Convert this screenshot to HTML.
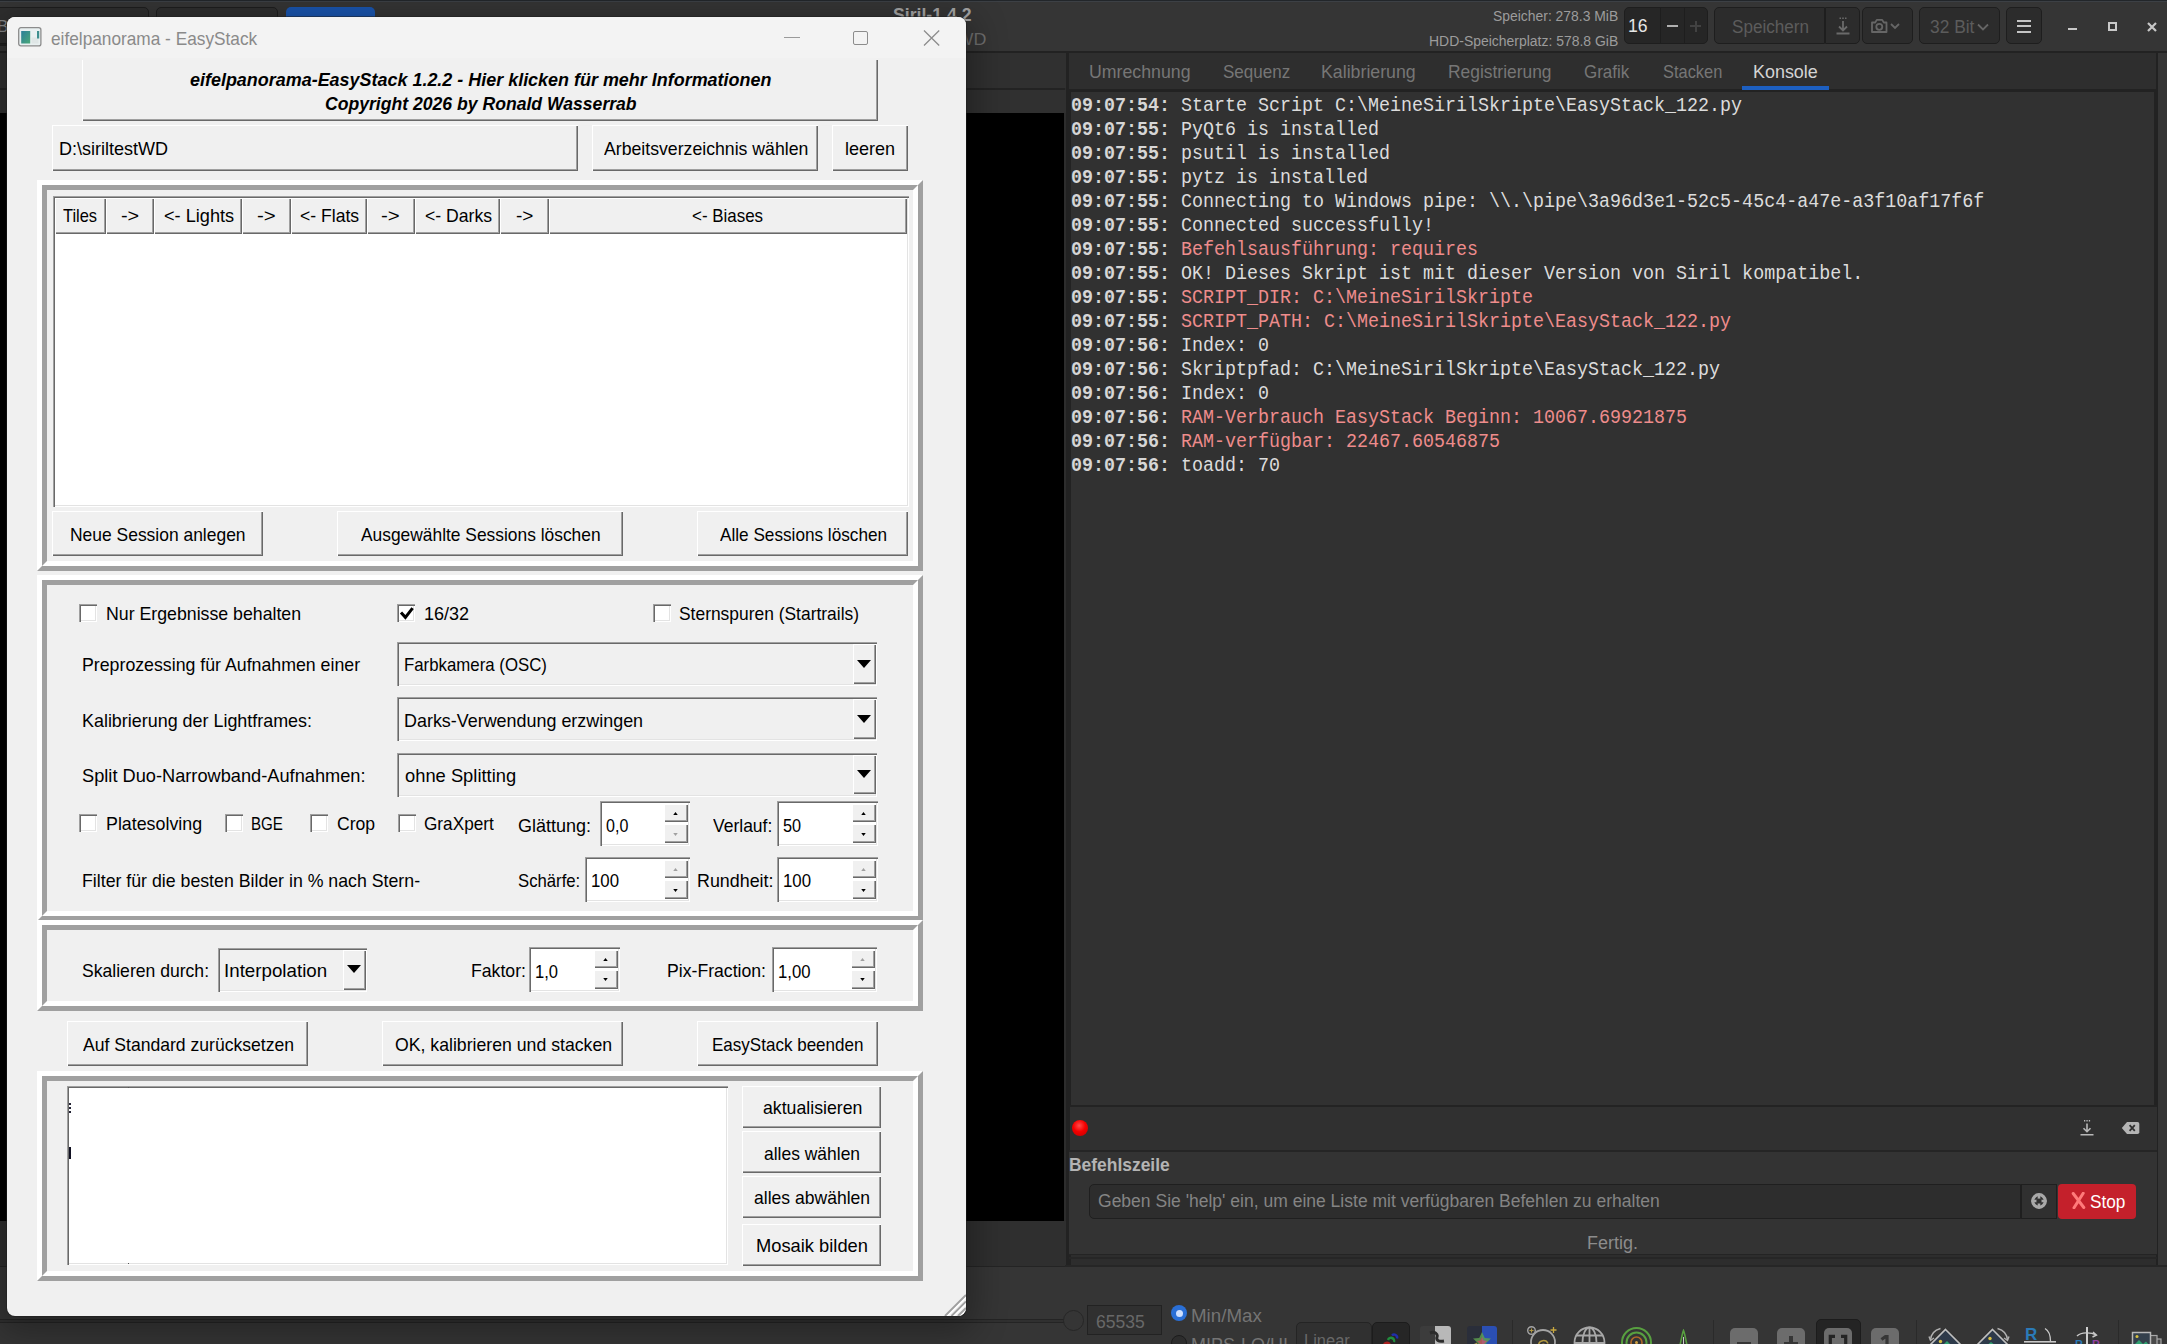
<!DOCTYPE html>
<html><head><meta charset="utf-8"><title>eifelpanorama - EasyStack</title>
<style>
html,body{margin:0;padding:0;width:2167px;height:1344px;overflow:hidden;}
body{width:2167px;height:1344px;overflow:hidden;position:relative;background:#2d2d2d;font-family:'Liberation Sans',sans-serif;}
.t{position:absolute;white-space:pre;transform-origin:0 0;}
div{box-sizing:border-box;}
#root{position:absolute;left:0;top:0;width:2167px;height:1344px;overflow:hidden;background:#2d2d2d;}

.btn{position:absolute;background:#f0f0f0;box-shadow:inset 1px 1px 0 #fff,inset -1px -1px 0 #696969,inset -2px -2px 0 #a0a0a0;}
.sunk{position:absolute;box-shadow:inset 1px 1px 0 #a0a0a0,inset 2px 2px 0 #696969,inset -1px -1px 0 #fff,inset -2px -2px 0 #e3e3e3;}
.fo{position:absolute;border-style:solid;border-width:5px;border-color:#fff #a0a0a0 #a0a0a0 #fff;}
.fi{position:absolute;left:0;top:0;right:0;bottom:0;border-style:solid;border-width:5px;border-color:#a0a0a0 #fff #fff #a0a0a0;}
.cb{position:absolute;width:18px;height:18px;background:#fff;box-shadow:inset 1px 1px 0 #a0a0a0,inset 2px 2px 0 #696969,inset -1px -1px 0 #fff,inset -2px -2px 0 #e3e3e3;}
.gb{position:absolute;background:#2c2c2c;border:1px solid #1e1e1e;border-radius:5px;}

</style></head><body><div id="root">
<div style="position:absolute;left:0px;top:0px;width:2167px;height:52px;background:#353535;"></div><div style="position:absolute;left:0px;top:0px;width:2167px;height:1px;background:#22262a;"></div><div style="position:absolute;left:0px;top:1px;width:2167px;height:1px;background:#3c4045;"></div><div style="position:absolute;left:0px;top:51px;width:2167px;height:2px;background:#222;"></div><div style="position:absolute;left:0px;top:53px;width:1066px;height:35px;background:#303030;"></div><div style="position:absolute;left:0px;top:90px;width:1066px;height:23px;background:#303030;"></div><div class="gb" style="left:-6px;top:7px;width:155px;height:37px;background:#2f2f2f;"></div><div class="gb" style="left:156px;top:7px;width:122px;height:37px;background:#2f2f2f;"></div><div style="position:absolute;left:286px;top:7px;width:89px;height:37px;background:#1a56b0;border-radius:5px;"></div><span class="t" style="left:-3.00px;top:17.55px;font-size:17px;line-height:17px;color:#8a8a8a;">B</span><span class="t" style="left:893.00px;top:5.70px;font-size:18px;line-height:18px;color:#a6a6a6;font-weight:bold;transform:scaleX(0.9809);">Siril-1.4.2</span><span class="t" style="left:877.95px;top:30.95px;font-size:17px;line-height:17px;color:#6e6e6e;transform:scaleX(1.0525);">D:\siriltestWD</span><span class="t" style="left:1493.00px;top:9.97px;font-size:13.8px;line-height:13.8px;color:#9c9c9c;transform:scaleX(1.0078);">Speicher: 278.3 MiB</span><span class="t" style="left:1428.99px;top:34.77px;font-size:13.8px;line-height:13.8px;color:#9c9c9c;transform:scaleX(1.0113);">HDD-Speicherplatz: 578.8 GiB</span><div class="gb" style="left:1624px;top:7px;width:84px;height:37px;background:#262626;"></div><div style="position:absolute;left:1660px;top:8px;width:1px;height:35px;background:#1e1e1e;"></div><div style="position:absolute;left:1684px;top:8px;width:1px;height:35px;background:#1e1e1e;"></div><span class="t" style="left:1628.02px;top:16.70px;font-size:18px;line-height:18px;color:#e6e6e6;transform:scaleX(0.9784);">16</span><div style="position:absolute;left:1667px;top:25px;width:11px;height:2px;background:#b0b0b0;"></div><div style="position:absolute;left:1690px;top:25px;width:11px;height:2px;background:#424242;"></div><div style="position:absolute;left:1694.5px;top:20.5px;width:2px;height:11px;background:#424242;"></div><div class="gb" style="left:1714px;top:7px;width:111px;height:37px;border-radius:5px 0 0 5px;"></div><span class="t" style="left:1731.50px;top:17.70px;font-size:18px;line-height:18px;color:#5c5c5c;transform:scaleX(0.9495);">Speichern</span><div class="gb" style="left:1825px;top:7px;width:35px;height:37px;border-radius:0 5px 5px 0;"></div><svg style="position:absolute;left:1834px;top:16px" width="18" height="20" viewBox="0 0 18 20"><g stroke="#6a6a6a" stroke-width="1.8" fill="none"><path d="M9 5v9M5 10.5l4 4 4-4M2.5 17.5h13"/><path d="M5.5 2.2h1.5M8.2 2.2h1.6M11 2.2h1.5" stroke-width="1.6"/></g></svg><div class="gb" style="left:1862px;top:7px;width:51px;height:37px;"></div><svg style="position:absolute;left:1870px;top:16px" width="36" height="20" viewBox="0 0 36 20"><g stroke="#666" stroke-width="1.8" fill="none"><path d="M2 6.5h3.2l1.6-2.6h5.4l1.6 2.6H16.5v9.5H2z" stroke-linejoin="round"/><circle cx="9.3" cy="10.8" r="3"/><path d="M21 8l4 4 4-4"/></g></svg><div class="gb" style="left:1919px;top:7px;width:81px;height:37px;"></div><span class="t" style="left:1929.60px;top:17.70px;font-size:18px;line-height:18px;color:#5c5c5c;transform:scaleX(0.9646);">32 Bit</span><svg style="position:absolute;left:1976px;top:22px" width="14" height="10" viewBox="0 0 14 10"><path d="M2 2.5l5 5 5-5" stroke="#666" stroke-width="1.8" fill="none"/></svg><div class="gb" style="left:2006px;top:7px;width:36px;height:37px;"></div><div style="position:absolute;left:2017px;top:19.5px;width:14px;height:2px;background:#c4c4c4;"></div><div style="position:absolute;left:2017px;top:25px;width:14px;height:2px;background:#c4c4c4;"></div><div style="position:absolute;left:2017px;top:30.5px;width:14px;height:2px;background:#c4c4c4;"></div><div style="position:absolute;left:2068px;top:28px;width:9px;height:2px;background:#c8c8c8;"></div><div style="position:absolute;left:2108px;top:22px;width:9px;height:9px;border:2px solid #c8c8c8;"></div><svg style="position:absolute;left:2146px;top:21px" width="12" height="12" viewBox="0 0 12 12"><path d="M2 2l8 8M10 2l-8 8" stroke="#c8c8c8" stroke-width="2.2"/></svg><div style="position:absolute;left:0px;top:44px;width:8px;height:2px;background:#222;"></div><div style="position:absolute;left:0px;top:88px;width:1065px;height:2px;background:#232323;"></div><div style="position:absolute;left:0px;top:113px;width:1064px;height:1108px;background:#000;"></div><div style="position:absolute;left:0px;top:1221px;width:1066px;height:45px;background:#2f2f2f;"></div><div style="position:absolute;left:0px;top:1266px;width:1066px;height:78px;background:#353535;"></div><div style="position:absolute;left:0px;top:1266px;width:1066px;height:1.3px;background:#242424;"></div><div style="position:absolute;left:0px;top:1319px;width:1064px;height:1px;background:#242424;"></div><div style="position:absolute;left:0px;top:1320px;width:1064px;height:2px;background:#303030;"></div><div style="position:absolute;left:0px;top:1322px;width:1064px;height:1px;background:#242424;"></div><div style="position:absolute;left:1066px;top:53px;width:3px;height:1213px;background:#222;"></div><div style="position:absolute;left:1069px;top:53px;width:1089px;height:36px;background:#2e2e2e;"></div><div style="position:absolute;left:1069px;top:89px;width:1089px;height:2.6px;background:#222;"></div><div style="position:absolute;left:2156px;top:53px;width:11px;height:1213px;background:#353535;"></div><div style="position:absolute;left:2156px;top:53px;width:2px;height:1213px;background:#222;"></div><div style="position:absolute;left:1066px;top:91.5px;width:5px;height:1175px;background:#222;"></div><div style="position:absolute;left:1070.5px;top:91.5px;width:1083.5px;height:1014px;background:#313131;"></div><div style="position:absolute;left:2154px;top:91.5px;width:4px;height:1014px;background:#222;"></div><span class="t" style="left:1088.74px;top:63.27px;font-size:18.5px;line-height:18.5px;color:#767676;transform:scaleX(0.9587);">Umrechnung</span><span class="t" style="left:1223.00px;top:63.27px;font-size:18.5px;line-height:18.5px;color:#767676;transform:scaleX(0.9205);">Sequenz</span><span class="t" style="left:1321.04px;top:63.27px;font-size:18.5px;line-height:18.5px;color:#767676;transform:scaleX(0.9596);">Kalibrierung</span><span class="t" style="left:1447.76px;top:63.27px;font-size:18.5px;line-height:18.5px;color:#767676;transform:scaleX(0.9408);">Registrierung</span><span class="t" style="left:1584.00px;top:63.27px;font-size:18.5px;line-height:18.5px;color:#767676;transform:scaleX(0.9184);">Grafik</span><span class="t" style="left:1662.50px;top:63.27px;font-size:18.5px;line-height:18.5px;color:#767676;transform:scaleX(0.8880);">Stacken</span><span class="t" style="left:1753.03px;top:63.27px;font-size:18.5px;line-height:18.5px;color:#d4d4d4;transform:scaleX(0.9685);">Konsole</span><div style="position:absolute;left:1742px;top:86.3px;width:87px;height:3.6px;background:#1d5fc0;"></div><div style="position:absolute;left:1071.2px;top:91.8px;width:1200px;height:600px;font-family:'Liberation Mono', monospace;font-size:20px;transform:scaleX(0.91667);transform-origin:0 0;"><div style="position:absolute;left:0;top:4.67px;height:20px;line-height:20px;white-space:pre;color:#dcdcdc"><b style="color:#d6d6d6">09:07:54:</b> Starte Script C:\MeineSirilSkripte\EasyStack_122.py</div><div style="position:absolute;left:0;top:28.67px;height:20px;line-height:20px;white-space:pre;color:#dcdcdc"><b style="color:#d6d6d6">09:07:55:</b> PyQt6 is installed</div><div style="position:absolute;left:0;top:52.67px;height:20px;line-height:20px;white-space:pre;color:#dcdcdc"><b style="color:#d6d6d6">09:07:55:</b> psutil is installed</div><div style="position:absolute;left:0;top:76.67px;height:20px;line-height:20px;white-space:pre;color:#dcdcdc"><b style="color:#d6d6d6">09:07:55:</b> pytz is installed</div><div style="position:absolute;left:0;top:100.67px;height:20px;line-height:20px;white-space:pre;color:#dcdcdc"><b style="color:#d6d6d6">09:07:55:</b> Connecting to Windows pipe: \\.\pipe\3a96d3e1-52c5-45c4-a47e-a3f10af17f6f</div><div style="position:absolute;left:0;top:124.67px;height:20px;line-height:20px;white-space:pre;color:#dcdcdc"><b style="color:#d6d6d6">09:07:55:</b> Connected successfully!</div><div style="position:absolute;left:0;top:148.67px;height:20px;line-height:20px;white-space:pre;color:#ee8c8c"><b style="color:#d6d6d6">09:07:55:</b> Befehlsausführung: requires</div><div style="position:absolute;left:0;top:172.67px;height:20px;line-height:20px;white-space:pre;color:#dcdcdc"><b style="color:#d6d6d6">09:07:55:</b> OK! Dieses Skript ist mit dieser Version von Siril kompatibel.</div><div style="position:absolute;left:0;top:196.67px;height:20px;line-height:20px;white-space:pre;color:#ee8c8c"><b style="color:#d6d6d6">09:07:55:</b> SCRIPT_DIR: C:\MeineSirilSkripte</div><div style="position:absolute;left:0;top:220.67px;height:20px;line-height:20px;white-space:pre;color:#ee8c8c"><b style="color:#d6d6d6">09:07:55:</b> SCRIPT_PATH: C:\MeineSirilSkripte\EasyStack_122.py</div><div style="position:absolute;left:0;top:244.67px;height:20px;line-height:20px;white-space:pre;color:#dcdcdc"><b style="color:#d6d6d6">09:07:56:</b> Index: 0</div><div style="position:absolute;left:0;top:268.67px;height:20px;line-height:20px;white-space:pre;color:#dcdcdc"><b style="color:#d6d6d6">09:07:56:</b> Skriptpfad: C:\MeineSirilSkripte\EasyStack_122.py</div><div style="position:absolute;left:0;top:292.67px;height:20px;line-height:20px;white-space:pre;color:#dcdcdc"><b style="color:#d6d6d6">09:07:56:</b> Index: 0</div><div style="position:absolute;left:0;top:316.67px;height:20px;line-height:20px;white-space:pre;color:#ee8c8c"><b style="color:#d6d6d6">09:07:56:</b> RAM-Verbrauch EasyStack Beginn: 10067.69921875</div><div style="position:absolute;left:0;top:340.67px;height:20px;line-height:20px;white-space:pre;color:#ee8c8c"><b style="color:#d6d6d6">09:07:56:</b> RAM-verfügbar: 22467.60546875</div><div style="position:absolute;left:0;top:364.67px;height:20px;line-height:20px;white-space:pre;color:#dcdcdc"><b style="color:#d6d6d6">09:07:56:</b> toadd: 70</div></div><div style="position:absolute;left:1069px;top:1105px;width:1088px;height:1.5px;background:#232323;"></div><div style="position:absolute;left:1070px;top:1106.5px;width:1087px;height:43.5px;background:#303030;"></div><div style="position:absolute;left:1069px;top:1150px;width:1088px;height:1.5px;background:#252525;"></div><div style="position:absolute;left:1069px;top:1151.5px;width:1088px;height:103px;background:#333333;"></div><div style="position:absolute;left:1069px;top:1254px;width:1088px;height:1.3px;background:#242424;"></div><div style="position:absolute;left:1069px;top:1257.3px;width:1088px;height:1.3px;background:#262626;"></div><div style="position:absolute;left:1065px;top:1265px;width:1102px;height:1.5px;background:#262626;"></div><div style="position:absolute;left:1066px;top:1266.5px;width:1101px;height:78px;background:#353535;"></div><div style="position:absolute;left:1072px;top:1120px;width:16px;height:16px;border-radius:50%;background:radial-gradient(circle at 45% 35%,#ff4a4a 0,#f40000 45%,#c00000 100%);"></div><svg style="position:absolute;left:2078px;top:1119px" width="18" height="18" viewBox="0 0 18 18"><g stroke="#b8b8b8" stroke-width="1.6" fill="none"><path d="M9 4.5v8M5.5 9.2l3.5 3.5 3.5-3.5M2.5 15.7h13"/><path d="M6 1.8h1.3M8.4 1.8h1.3M10.8 1.8h1.3" stroke-width="1.4"/></g></svg><svg style="position:absolute;left:2121px;top:1121px" width="19" height="14" viewBox="0 0 19 14"><path d="M6 1h10.5a1.8 1.8 0 0 1 1.8 1.8v8.4a1.8 1.8 0 0 1-1.8 1.8H6L.8 7z" fill="#b4b4b4"/><path d="M8.6 4.2l5.2 5.6M13.8 4.2l-5.2 5.6" stroke="#303030" stroke-width="1.8"/></svg><span class="t" style="left:1069.00px;top:1156.72px;font-size:17.5px;line-height:17.5px;color:#b4b4b4;font-weight:bold;transform:scaleX(0.9958);">Befehlszeile</span><div class="gb" style="left:1089px;top:1183.5px;width:932px;height:35px;background:#2d2d2d;border-color:#1f1f1f;border-radius:5px 0 0 5px;"></div><span class="t" style="left:1098.00px;top:1192.92px;font-size:17.5px;line-height:17.5px;color:#848484;transform:scaleX(1.0010);">Geben Sie &#x27;help&#x27; ein, um eine Liste mit verfügbaren Befehlen zu erhalten</span><div class="gb" style="left:2021px;top:1183.5px;width:36px;height:35px;background:#303030;border-color:#1f1f1f;border-radius:0;"></div><svg style="position:absolute;left:2030px;top:1192px" width="18" height="18" viewBox="0 0 18 18"><circle cx="9" cy="9" r="6.3" stroke="#a8a8a8" stroke-width="3.2" fill="none"/><path d="M9 1.500v15M1.500 9h15" stroke="#a8a8a8" stroke-width="2.6"/><circle cx="9" cy="9" r="2.600" fill="#303030"/></svg><div style="position:absolute;left:2057.5px;top:1183.5px;width:78.5px;height:35px;background:#c4202b;border-radius:4px;"></div><svg style="position:absolute;left:2071px;top:1192px" width="15" height="17" viewBox="0 0 15 17"><path d="M2.2 1.5l10.6 14M12.2 1.2L3 15.8" stroke="#ff7a7a" stroke-width="3" stroke-linecap="round"/></svg><span class="t" style="left:2089.60px;top:1193.20px;font-size:18px;line-height:18px;color:#fff;transform:scaleX(0.9563);">Stop</span><span class="t" style="left:1586.97px;top:1235.12px;font-size:17.5px;line-height:17.5px;color:#8c8c8c;transform:scaleX(1.0266);">Fertig.</span><div style="position:absolute;left:1063px;top:1310px;width:21px;height:21px;border-radius:50%;border:1.5px solid #262626;background:#353535;"></div><div style="position:absolute;left:1087px;top:1305px;width:75px;height:30px;border:1px solid #222;background:#303030;"></div><span class="t" style="left:1096.00px;top:1313.92px;font-size:17.5px;line-height:17.5px;color:#686868;transform:scaleX(1.0014);">65535</span><div style="position:absolute;left:1171px;top:1305px;width:16px;height:16px;border-radius:50%;background:#2a6fd6;"></div><div style="position:absolute;left:1175.5px;top:1309.5px;width:7px;height:7px;border-radius:50%;background:#cfe0ff;"></div><span class="t" style="left:1190.93px;top:1307.62px;font-size:17.5px;line-height:17.5px;color:#747474;transform:scaleX(1.0708);">Min/Max</span><div style="position:absolute;left:1171px;top:1335px;width:16px;height:16px;border-radius:50%;border:1.5px solid #1c1c1c;background:#2d2d2d;"></div><span class="t" style="left:1190.97px;top:1337.12px;font-size:17.5px;line-height:17.5px;color:#747474;transform:scaleX(1.0275);">MIPS-LO/HI</span><div class="gb" style="left:1296px;top:1322px;width:76px;height:30px;background:#303030;border-color:#242424;"></div><span class="t" style="left:1304.06px;top:1333.12px;font-size:17.5px;line-height:17.5px;color:#686868;transform:scaleX(0.9411);">Linear</span><div class="gb" style="left:1372px;top:1322px;width:38px;height:30px;background:#262626;border-color:#1c1c1c;"></div><div style="position:absolute;left:7px;top:17px;width:959px;height:1299px;background:#f0f0f0;border-radius:8px;box-shadow:0 0 0 1px rgba(30,30,30,.5),0 8px 34px 8px rgba(0,0,0,.30);"></div><div style="position:absolute;left:7px;top:17px;width:959px;height:41px;background:#f3f3f3;border-radius:8px 8px 0 0;"></div><svg style="position:absolute;left:18px;top:27px" width="24" height="20" viewBox="0 0 24 20"><defs><linearGradient id="ig" x1="0" y1="0" x2="1" y2="1"><stop offset="0" stop-color="#2a7f9a"/><stop offset="1" stop-color="#4aa878"/></linearGradient></defs><rect x=".7" y=".7" width="22.2" height="18.2" rx="2.2" fill="#e9f0f1" stroke="#8c8c8c" stroke-width="1.3"/><rect x="3.2" y="4" width="9" height="12.5" fill="url(#ig)"/><rect x="13.5" y="10.5" width="7" height="6" fill="#dfe6e6"/><rect x="19" y="4" width="2.2" height="7.5" fill="#3f8f8f"/></svg><span class="t" style="left:51.00px;top:29.53px;font-size:18.2px;line-height:18.2px;color:#8a8a8a;transform:scaleX(0.9485);">eifelpanorama - EasyStack</span><div style="position:absolute;left:783.5px;top:36.5px;width:16px;height:1.3px;background:#9a9a9a;"></div><div style="position:absolute;left:853px;top:30.5px;width:15px;height:14.5px;border:1.4px solid #8c8c8c;border-radius:2px;"></div><svg style="position:absolute;left:922px;top:29px" width="19" height="18" viewBox="0 0 19 18"><path d="M2 1.5l15.2 15M17.2 1.5L2 16.5" stroke="#8c8c8c" stroke-width="1.3"/></svg><div class="btn" style="left:82px;top:59px;width:796px;height:61.5px;"></div><div style="position:absolute;left:82px;top:58px;width:796px;height:2px;background:#f1f1f1;"></div><span class="t" style="left:189.50px;top:70.83px;font-size:18.2px;line-height:18.2px;color:#000;font-weight:bold;font-style:italic;transform:scaleX(0.9866);">eifelpanorama-EasyStack 1.2.2 - Hier klicken für mehr Informationen</span><span class="t" style="left:324.50px;top:94.83px;font-size:18.2px;line-height:18.2px;color:#000;font-weight:bold;font-style:italic;transform:scaleX(0.9675);">Copyright 2026 by Ronald Wasserrab</span><div class="btn" style="left:52px;top:125px;width:525.5px;height:45.69999999999999px;"></div><span class="t" style="left:59.01px;top:140.03px;font-size:18.2px;line-height:18.2px;color:#000;transform:scaleX(0.9909);">D:\siriltestWD</span><div class="btn" style="left:592px;top:125px;width:226px;height:45.69999999999999px;"></div><span class="t" style="left:603.70px;top:140.03px;font-size:18.2px;line-height:18.2px;color:#000;transform:scaleX(0.9720);">Arbeitsverzeichnis wählen</span><div class="btn" style="left:832px;top:125px;width:76px;height:45.69999999999999px;"></div><span class="t" style="left:845.01px;top:140.03px;font-size:18.2px;line-height:18.2px;color:#000;transform:scaleX(0.9909);">leeren</span><div class="fo" style="left:37px;top:180px;width:886px;height:391px;"><div class="fi"></div></div><div class="sunk" style="left:53px;top:196px;width:855.5px;height:310.5px;background:#fff;"></div><div class="btn" style="left:55px;top:198px;width:50.5px;height:36px;"></div><span class="t" style="left:63.00px;top:207.03px;font-size:18.2px;line-height:18.2px;color:#000;transform:scaleX(0.9035);">Tiles</span><div class="btn" style="left:105.5px;top:198px;width:48.0px;height:36px;"></div><span class="t" style="left:120.50px;top:207.03px;font-size:18.2px;line-height:18.2px;color:#000;transform:scaleX(1.0899);">-&gt;</span><div class="btn" style="left:153.5px;top:198px;width:88.5px;height:36px;"></div><span class="t" style="left:164.00px;top:207.03px;font-size:18.2px;line-height:18.2px;color:#000;transform:scaleX(0.9976);">&lt;- Lights</span><div class="btn" style="left:242px;top:198px;width:48.5px;height:36px;"></div><span class="t" style="left:257.00px;top:207.03px;font-size:18.2px;line-height:18.2px;color:#000;transform:scaleX(1.1210);">-&gt;</span><div class="btn" style="left:290.5px;top:198px;width:76.0px;height:36px;"></div><span class="t" style="left:300.00px;top:207.03px;font-size:18.2px;line-height:18.2px;color:#000;transform:scaleX(0.9664);">&lt;- Flats</span><div class="btn" style="left:366.5px;top:198px;width:48.0px;height:36px;"></div><span class="t" style="left:381.30px;top:207.03px;font-size:18.2px;line-height:18.2px;color:#000;transform:scaleX(1.1210);">-&gt;</span><div class="btn" style="left:414.5px;top:198px;width:85.5px;height:36px;"></div><span class="t" style="left:424.50px;top:207.03px;font-size:18.2px;line-height:18.2px;color:#000;transform:scaleX(0.9692);">&lt;- Darks</span><div class="btn" style="left:500px;top:198px;width:48.5px;height:36px;"></div><span class="t" style="left:515.70px;top:207.03px;font-size:18.2px;line-height:18.2px;color:#000;transform:scaleX(1.0463);">-&gt;</span><div class="btn" style="left:548.5px;top:198px;width:358.0px;height:36px;"></div><span class="t" style="left:692.00px;top:207.03px;font-size:18.2px;line-height:18.2px;color:#000;transform:scaleX(0.9314);">&lt;- Biases</span><div class="btn" style="left:52px;top:510.5px;width:211px;height:45.5px;"></div><span class="t" style="left:70.04px;top:526.33px;font-size:18.2px;line-height:18.2px;color:#000;transform:scaleX(0.9591);">Neue Session anlegen</span><div class="btn" style="left:337px;top:510.5px;width:285.5px;height:45.5px;"></div><span class="t" style="left:361.00px;top:526.33px;font-size:18.2px;line-height:18.2px;color:#000;transform:scaleX(0.9555);">Ausgewählte Sessions löschen</span><div class="btn" style="left:697px;top:510.5px;width:211px;height:45.5px;"></div><span class="t" style="left:719.50px;top:526.33px;font-size:18.2px;line-height:18.2px;color:#000;transform:scaleX(0.9442);">Alle Sessions löschen</span><div class="fo" style="left:37px;top:575px;width:886px;height:345.5px;"><div class="fi"></div></div><div class="cb" style="left:79px;top:604px;"></div><span class="t" style="left:105.53px;top:605.23px;font-size:18.2px;line-height:18.2px;color:#000;transform:scaleX(0.9744);">Nur Ergebnisse behalten</span><div class="cb" style="left:397px;top:604px;"><svg width="18" height="18" viewBox="0 0 18 18" style="position:absolute;left:0;top:0"><path d="M4 8.4l4.4 4.9 7.2-9.2" stroke="#000" stroke-width="3" fill="none"/></svg></div><span class="t" style="left:424.01px;top:605.23px;font-size:18.2px;line-height:18.2px;color:#000;transform:scaleX(0.9910);">16/32</span><div class="cb" style="left:652.5px;top:604px;"></div><span class="t" style="left:679.00px;top:605.23px;font-size:18.2px;line-height:18.2px;color:#000;transform:scaleX(0.9575);">Sternspuren (Startrails)</span><span class="t" style="left:82.02px;top:656.03px;font-size:18.2px;line-height:18.2px;color:#000;transform:scaleX(0.9753);">Preprozessing für Aufnahmen einer</span><div class="sunk" style="left:397px;top:642px;width:480px;height:44px;background:#f0f0f0;"></div><div class="btn" style="left:852.5px;top:644px;width:23.5px;height:39.5px;"></div><svg style="position:absolute;left:857px;top:659.5px" width="14" height="8" viewBox="0 0 14 8"><path d="M0 0h14L7 8z" fill="#000"/></svg><span class="t" style="left:404.08px;top:656.03px;font-size:18.2px;line-height:18.2px;color:#000;transform:scaleX(0.9242);">Farbkamera (OSC)</span><span class="t" style="left:82.01px;top:712.03px;font-size:18.2px;line-height:18.2px;color:#000;transform:scaleX(0.9850);">Kalibrierung der Lightframes:</span><div class="sunk" style="left:397px;top:697px;width:480px;height:44px;background:#f0f0f0;"></div><div class="btn" style="left:852.5px;top:699px;width:23.5px;height:39.5px;"></div><svg style="position:absolute;left:857px;top:714.5px" width="14" height="8" viewBox="0 0 14 8"><path d="M0 0h14L7 8z" fill="#000"/></svg><span class="t" style="left:404.01px;top:712.03px;font-size:18.2px;line-height:18.2px;color:#000;transform:scaleX(0.9854);">Darks-Verwendung erzwingen</span><span class="t" style="left:82.00px;top:767.33px;font-size:18.2px;line-height:18.2px;color:#000;transform:scaleX(1.0017);">Split Duo-Narrowband-Aufnahmen:</span><div class="sunk" style="left:397px;top:752.5px;width:480px;height:44.0px;background:#f0f0f0;"></div><div class="btn" style="left:852.5px;top:754.5px;width:23.5px;height:39.5px;"></div><svg style="position:absolute;left:857px;top:770.0px" width="14" height="8" viewBox="0 0 14 8"><path d="M0 0h14L7 8z" fill="#000"/></svg><span class="t" style="left:405.00px;top:767.33px;font-size:18.2px;line-height:18.2px;color:#000;transform:scaleX(1.0082);">ohne Splitting</span><div class="cb" style="left:79px;top:813.5px;"></div><span class="t" style="left:105.52px;top:814.83px;font-size:18.2px;line-height:18.2px;color:#000;transform:scaleX(0.9796);">Platesolving</span><div class="cb" style="left:225px;top:813.5px;"></div><span class="t" style="left:251.17px;top:814.83px;font-size:18.2px;line-height:18.2px;color:#000;transform:scaleX(0.8316);">BGE</span><div class="cb" style="left:310px;top:813.5px;"></div><span class="t" style="left:337.00px;top:814.83px;font-size:18.2px;line-height:18.2px;color:#000;transform:scaleX(0.9668);">Crop</span><div class="cb" style="left:397.5px;top:813.5px;"></div><span class="t" style="left:424.30px;top:814.83px;font-size:18.2px;line-height:18.2px;color:#000;transform:scaleX(0.9453);">GraXpert</span><span class="t" style="left:517.50px;top:816.53px;font-size:18.2px;line-height:18.2px;color:#000;transform:scaleX(0.9896);">Glättung:</span><div class="sunk" style="left:599.8px;top:801.2px;width:90.5px;height:45.299999999999955px;background:#fff;"></div><div class="btn" style="left:664.2px;top:804px;width:24.299999999999955px;height:18.299999999999955px;"></div><div class="btn" style="left:664.2px;top:824.2px;width:24.299999999999955px;height:18.799999999999955px;"></div><svg style="position:absolute;left:673.35px;top:812.0px" width="5" height="3" viewBox="0 0 6 4"><path d="M0 4h6L3 0z" fill="#000"/></svg><svg style="position:absolute;left:673.35px;top:832.5px" width="5" height="3" viewBox="0 0 6 4"><path d="M0 0h6L3 4z" fill="#a0a0a0"/></svg><span class="t" style="left:605.80px;top:816.53px;font-size:18.2px;line-height:18.2px;color:#000;transform:scaleX(0.8821);">0,0</span><span class="t" style="left:712.50px;top:816.53px;font-size:18.2px;line-height:18.2px;color:#000;transform:scaleX(0.9617);">Verlauf:</span><div class="sunk" style="left:776.8px;top:801.2px;width:101.0px;height:45.299999999999955px;background:#fff;"></div><div class="btn" style="left:851.7px;top:804px;width:24.299999999999955px;height:18.299999999999955px;"></div><div class="btn" style="left:851.7px;top:824.2px;width:24.299999999999955px;height:18.799999999999955px;"></div><svg style="position:absolute;left:860.85px;top:812.0px" width="5" height="3" viewBox="0 0 6 4"><path d="M0 4h6L3 0z" fill="#000"/></svg><svg style="position:absolute;left:860.85px;top:832.5px" width="5" height="3" viewBox="0 0 6 4"><path d="M0 0h6L3 4z" fill="#000"/></svg><span class="t" style="left:783.00px;top:816.53px;font-size:18.2px;line-height:18.2px;color:#000;transform:scaleX(0.8949);">50</span><span class="t" style="left:82.03px;top:871.53px;font-size:18.2px;line-height:18.2px;color:#000;transform:scaleX(0.9749);">Filter für die besten Bilder in % nach Stern-</span><span class="t" style="left:517.50px;top:871.53px;font-size:18.2px;line-height:18.2px;color:#000;transform:scaleX(0.9193);">Schärfe:</span><div class="sunk" style="left:584.8px;top:857.2px;width:105.5px;height:45.299999999999955px;background:#fff;"></div><div class="btn" style="left:664.2px;top:860px;width:24.299999999999955px;height:18.299999999999955px;"></div><div class="btn" style="left:664.2px;top:880.2px;width:24.299999999999955px;height:18.799999999999955px;"></div><svg style="position:absolute;left:673.35px;top:868.0px" width="5" height="3" viewBox="0 0 6 4"><path d="M0 4h6L3 0z" fill="#a0a0a0"/></svg><svg style="position:absolute;left:673.35px;top:888.5px" width="5" height="3" viewBox="0 0 6 4"><path d="M0 0h6L3 4z" fill="#000"/></svg><span class="t" style="left:590.88px;top:872.03px;font-size:18.2px;line-height:18.2px;color:#000;transform:scaleX(0.9237);">100</span><span class="t" style="left:696.52px;top:871.53px;font-size:18.2px;line-height:18.2px;color:#000;transform:scaleX(0.9828);">Rundheit:</span><div class="sunk" style="left:776.8px;top:857.2px;width:101.0px;height:45.299999999999955px;background:#fff;"></div><div class="btn" style="left:851.7px;top:860px;width:24.299999999999955px;height:18.299999999999955px;"></div><div class="btn" style="left:851.7px;top:880.2px;width:24.299999999999955px;height:18.799999999999955px;"></div><svg style="position:absolute;left:860.85px;top:868.0px" width="5" height="3" viewBox="0 0 6 4"><path d="M0 4h6L3 0z" fill="#a0a0a0"/></svg><svg style="position:absolute;left:860.85px;top:888.5px" width="5" height="3" viewBox="0 0 6 4"><path d="M0 0h6L3 4z" fill="#000"/></svg><span class="t" style="left:782.88px;top:872.03px;font-size:18.2px;line-height:18.2px;color:#000;transform:scaleX(0.9237);">100</span><div class="fo" style="left:37px;top:920px;width:886px;height:90.5px;"><div class="fi"></div></div><span class="t" style="left:82.00px;top:962.03px;font-size:18.2px;line-height:18.2px;color:#000;transform:scaleX(0.9665);">Skalieren durch:</span><div class="sunk" style="left:217.5px;top:947.5px;width:149.5px;height:44.5px;background:#f0f0f0;"></div><div class="btn" style="left:342.5px;top:949.5px;width:23.5px;height:40.0px;"></div><svg style="position:absolute;left:347px;top:965.25px" width="14" height="8" viewBox="0 0 14 8"><path d="M0 0h14L7 8z" fill="#000"/></svg><span class="t" style="left:223.97px;top:962.03px;font-size:18.2px;line-height:18.2px;color:#000;transform:scaleX(1.0307);">Interpolation</span><span class="t" style="left:471.03px;top:962.03px;font-size:18.2px;line-height:18.2px;color:#000;transform:scaleX(0.9717);">Faktor:</span><div class="sunk" style="left:528.8px;top:946.7px;width:91.0px;height:45.799999999999955px;background:#fff;"></div><div class="btn" style="left:593.7px;top:949.5px;width:24.299999999999955px;height:18.549999999999955px;"></div><div class="btn" style="left:593.7px;top:969.95px;width:24.299999999999955px;height:19.049999999999955px;"></div><svg style="position:absolute;left:602.85px;top:957.625px" width="5" height="3" viewBox="0 0 6 4"><path d="M0 4h6L3 0z" fill="#000"/></svg><svg style="position:absolute;left:602.85px;top:978.375px" width="5" height="3" viewBox="0 0 6 4"><path d="M0 0h6L3 4z" fill="#000"/></svg><span class="t" style="left:535.09px;top:962.53px;font-size:18.2px;line-height:18.2px;color:#000;transform:scaleX(0.9103);">1,0</span><span class="t" style="left:666.53px;top:962.03px;font-size:18.2px;line-height:18.2px;color:#000;transform:scaleX(0.9698);">Pix-Fraction:</span><div class="sunk" style="left:771.8px;top:946.7px;width:105.0px;height:45.799999999999955px;background:#fff;"></div><div class="btn" style="left:850.7px;top:949.5px;width:24.299999999999955px;height:18.549999999999955px;"></div><div class="btn" style="left:850.7px;top:969.95px;width:24.299999999999955px;height:19.049999999999955px;"></div><svg style="position:absolute;left:859.85px;top:957.625px" width="5" height="3" viewBox="0 0 6 4"><path d="M0 4h6L3 0z" fill="#a0a0a0"/></svg><svg style="position:absolute;left:859.85px;top:978.375px" width="5" height="3" viewBox="0 0 6 4"><path d="M0 0h6L3 4z" fill="#000"/></svg><span class="t" style="left:778.08px;top:962.53px;font-size:18.2px;line-height:18.2px;color:#000;transform:scaleX(0.9188);">1,00</span><div class="btn" style="left:67px;top:1020.5px;width:241px;height:45.200000000000045px;"></div><span class="t" style="left:82.50px;top:1036.23px;font-size:18.2px;line-height:18.2px;color:#000;transform:scaleX(0.9666);">Auf Standard zurücksetzen</span><div class="btn" style="left:382px;top:1020.5px;width:241px;height:45.200000000000045px;"></div><span class="t" style="left:394.50px;top:1036.23px;font-size:18.2px;line-height:18.2px;color:#000;transform:scaleX(0.9716);">OK, kalibrieren und stacken</span><div class="btn" style="left:697px;top:1020.5px;width:180.5px;height:45.200000000000045px;"></div><span class="t" style="left:712.06px;top:1036.23px;font-size:18.2px;line-height:18.2px;color:#000;transform:scaleX(0.9363);">EasyStack beenden</span><div class="fo" style="left:37px;top:1070.5px;width:886px;height:210.5px;"><div class="fi"></div></div><div class="sunk" style="left:67px;top:1085.5px;width:660.5px;height:179.5px;background:#fff;"></div><div style="position:absolute;left:69px;top:1103px;width:1.5px;height:11px;background:repeating-linear-gradient(#223 0 2px,#fff 2px 4px);"></div><div style="position:absolute;left:69px;top:1147px;width:1.5px;height:12px;background:#112;"></div><div style="position:absolute;left:127.5px;top:1087px;width:1.5px;height:1px;background:#555;"></div><div style="position:absolute;left:127.5px;top:1263px;width:1.5px;height:1px;background:#555;"></div><div class="btn" style="left:742px;top:1085.5px;width:139px;height:42.200000000000045px;"></div><span class="t" style="left:762.50px;top:1099.03px;font-size:18.2px;line-height:18.2px;color:#000;transform:scaleX(0.9733);">aktualisieren</span><div class="btn" style="left:742px;top:1130.5px;width:139px;height:42.200000000000045px;"></div><span class="t" style="left:764.30px;top:1144.53px;font-size:18.2px;line-height:18.2px;color:#000;transform:scaleX(0.9598);">alles wählen</span><div class="btn" style="left:742px;top:1175.5px;width:139px;height:42.200000000000045px;"></div><span class="t" style="left:754.30px;top:1189.03px;font-size:18.2px;line-height:18.2px;color:#000;transform:scaleX(0.9647);">alles abwählen</span><div class="btn" style="left:742px;top:1223.5px;width:139px;height:42.200000000000045px;"></div><span class="t" style="left:755.99px;top:1236.53px;font-size:18.2px;line-height:18.2px;color:#000;transform:scaleX(1.0065);">Mosaik bilden</span><div style="position:absolute;left:944px;top:1294px;width:22px;height:22px;overflow:hidden;border-radius:0 0 8px 0;"><svg width="22" height="22" viewBox="0 0 22 22"><path d="M1 22L22 1M7.500 22L22 7.500M14 22l8-8" stroke="#a0a0a0" stroke-width="2"/><path d="M3 22.500L22.500 3M9.500 22.500l13-13M16 22.500l6.500-6.500" stroke="#fff" stroke-width="1.300"/></svg></div><svg style="position:absolute;left:1380px;top:1332px;opacity:.85" width="24" height="18" viewBox="0 0 24 18"><g fill="none" stroke-width="2.4"><path d="M12 3.5a3 3 0 0 1 5 3" stroke="#2030c0"/><path d="M8 8a3 3 0 0 1 6 2" stroke="#20a040"/><path d="M4 13a3 3 0 0 1 6 2" stroke="#c02020"/></g></svg><div style="position:absolute;left:1419.5px;top:1326px;width:16px;height:20px;background:#3c3c3c;border-radius:3px 0 0 0;"></div><div style="position:absolute;left:1435px;top:1326px;width:15.5px;height:20px;background:#b8b8b8;border-radius:0 3px 0 0;"></div><svg style="position:absolute;left:1428px;top:1330px" width="18" height="16" viewBox="0 0 18 16"><path d="M2 3c5-2 8 1 7 4s1 5 7 4" stroke="#2c2c2c" stroke-width="3" fill="none"/></svg><div style="position:absolute;left:1466.5px;top:1326px;width:15px;height:20px;background:#2a2e3a;border-radius:3px 0 0 0;"></div><div style="position:absolute;left:1481.5px;top:1326px;width:15.5px;height:20px;background:#2b4fb3;border-radius:0 3px 0 0;"></div><svg style="position:absolute;left:1470px;top:1330px;opacity:.8" width="24" height="18" viewBox="0 0 24 18"><path d="M12 2l2.8 6 6.2.6-4.8 4.4 1.6 6.5L12 16l-5.8 3.5 1.6-6.5L3 8.600l6.200-.6z" fill="#5fa24e"/><path d="M12 7l1.600 3.500 3.400.4-2.600 2.500.9 3.600L12 15l-3.300 2 .9-3.600L7 10.900l3.400-.4z" fill="#d06060"/><path d="M4 14l3-1.500 1 4.500-4 3z" fill="#c9b050"/></svg><div style="position:absolute;left:1511.5px;top:1320px;width:1px;height:30px;background:#2a2a2a;"></div><svg style="position:absolute;left:1526px;top:1325px" width="32" height="22" viewBox="0 0 32 22"><circle cx="17" cy="17" r="12" stroke="#a4a4a4" stroke-width="1.800" fill="none"/><circle cx="5.500" cy="5.500" r="3.800" stroke="#a4a4a4" stroke-width="1.400" fill="#363636"/><path d="M3.500 5.500h4M5.500 3.500v4" stroke="#b49a40" stroke-width="1"/><path d="M27.500 2v6M24.500 5h6" stroke="#c8a840" stroke-width="1.300"/><path d="M12.500 20a5 5 0 0 1 9.500-1.500M15 21a2.500 2.500 0 0 1 4.500-.5" stroke="#b49a40" stroke-width="1.500" fill="none"/></svg><svg style="position:absolute;left:1573px;top:1326px" width="33" height="20" viewBox="0 0 33 20"><g stroke="#a8a8a8" stroke-width="1.800" fill="none"><circle cx="16.500" cy="16.500" r="15"/><ellipse cx="16.500" cy="16.500" rx="7" ry="15"/><path d="M16.500 1.500v20M3 9.500h27M1.500 17h30"/></g></svg><svg style="position:absolute;left:1620px;top:1326px" width="33" height="20" viewBox="0 0 33 20"><g fill="none"><circle cx="16.500" cy="16.500" r="14.500" stroke="#58a040" stroke-width="2"/><circle cx="16.500" cy="16.500" r="10" stroke="#58a040" stroke-width="2"/><circle cx="16.500" cy="16.500" r="5.500" stroke="#b06828" stroke-width="1.600"/><circle cx="16.500" cy="16.500" r="1.500" fill="#d0a040"/></g></svg><svg style="position:absolute;left:1678px;top:1329px" width="11" height="16" viewBox="0 0 11 16"><path d="M2 16c1.500-6 2-11 3.500-14.500C7 5 7.500 10 9 16" stroke="#58a040" stroke-width="1.600" fill="none"/><path d="M5.500 8v8" stroke="#c8c8c8" stroke-width="1"/></svg><div style="position:absolute;left:1713px;top:1320px;width:1px;height:30px;background:#2a2a2a;"></div><div style="position:absolute;left:1730px;top:1328px;width:28px;height:22px;background:#6c6c6c;border-radius:5px;"></div><div style="position:absolute;left:1737px;top:1341.5px;width:14px;height:4px;background:#363636;"></div><div style="position:absolute;left:1777px;top:1328px;width:28px;height:22px;background:#6c6c6c;border-radius:5px;"></div><div style="position:absolute;left:1789px;top:1336px;width:4px;height:12px;background:#363636;"></div><div style="position:absolute;left:1784px;top:1341.5px;width:14px;height:4px;background:#363636;"></div><div class="gb" style="left:1815.500px;top:1319px;width:45px;height:30px;background:#242424;border-color:#1c1c1c;"></div><div style="position:absolute;left:1824px;top:1328px;width:28px;height:22px;background:#6c6c6c;border-radius:5px;"></div><svg style="position:absolute;left:1824px;top:1328px" width="28" height="16" viewBox="0 0 28 16"><path d="M6.300 16V8.300h4.700M17 8.300h4.700V16" stroke="#242424" stroke-width="3.200" fill="none"/></svg><div style="position:absolute;left:1871px;top:1328px;width:28px;height:22px;background:#6c6c6c;border-radius:5px;"></div><svg style="position:absolute;left:1871px;top:1328px" width="28" height="16" viewBox="0 0 28 16"><path d="M10.500 11.500l4-3h1.500V16" stroke="#363636" stroke-width="3.200" fill="none"/></svg><div style="position:absolute;left:1915.5px;top:1320px;width:1px;height:30px;background:#2a2a2a;"></div><svg style="position:absolute;left:1928px;top:1324px" width="34" height="22" viewBox="0 0 34 22"><path d="M2.500 16C3 10 7 6 12.500 4.500" stroke="#b0b0b0" stroke-width="1.400" fill="none"/><path d="M1 12.500l1.500 4 3.500-2.500" stroke="#b0b0b0" stroke-width="1.400" fill="none"/><path d="M17.500 5.500L32 20 17.500 34.500 3 20z" fill="#2e3a4a" stroke="#c0c0c0" stroke-width="1.600"/><circle cx="12.500" cy="17.500" r="1.700" fill="#d8c040"/><path d="M14 22l5-5 5 5z" fill="#30a070"/></svg><svg style="position:absolute;left:1976px;top:1324px" width="34" height="22" viewBox="0 0 34 22"><path d="M31.500 16C31 10 27 6 21.500 4.500" stroke="#b0b0b0" stroke-width="1.400" fill="none"/><path d="M33 12.500l-1.500 4-3.500-2.500" stroke="#b0b0b0" stroke-width="1.400" fill="none"/><path d="M16.500 5.500L31 20 16.500 34.500 2 20z" fill="#2e3a4a" stroke="#c0c0c0" stroke-width="1.600"/><circle cx="14" cy="14.500" r="1.700" fill="#d8c040"/><path d="M10 22l5-4 5 4z" fill="#30a070"/></svg><svg style="position:absolute;left:2024px;top:1325px" width="33" height="20" viewBox="0 0 33 20"><text x="1" y="14.500" font-family="Liberation Sans" font-weight="bold" font-size="17" fill="#2a7ab8">R</text><path d="M0 16.800h32" stroke="#c8c8c8" stroke-width="1.600"/><path d="M21 3.500c3.500 2 5.500 7 5.500 13" stroke="#c8c8c8" stroke-width="1.300" fill="none"/></svg><svg style="position:absolute;left:2072px;top:1327px" width="30" height="19" viewBox="0 0 30 19"><path d="M15 0v19" stroke="#e0e0e0" stroke-width="1.800"/><path d="M5 9c4-4 14-4 19-1M21 5l3.500 3-4 2" stroke="#c8c8c8" stroke-width="1.400" fill="none"/><text x="3" y="21" font-family="Liberation Sans" font-weight="bold" font-size="11" fill="#2a7ab8">R</text><text x="20" y="21" font-family="Liberation Sans" font-weight="bold" font-size="11" fill="#9040a0">R</text></svg><div style="position:absolute;left:2117.5px;top:1320px;width:1px;height:30px;background:#2a2a2a;"></div><svg style="position:absolute;left:2131px;top:1331px" width="36" height="15" viewBox="0 0 36 15"><rect x="22" y="8" width="8" height="10" fill="#4a4a4a" stroke="#a8a8a8" stroke-width="1.200"/><rect x="15" y="4.500" width="11" height="12" fill="#4a4a4a" stroke="#a8a8a8" stroke-width="1.200"/><rect x="1.500" y="1.500" width="18" height="16" fill="#34404c" stroke="#b8b8b8" stroke-width="1.500"/><circle cx="6" cy="5.500" r="1.500" fill="#d8c040"/><path d="M3 14l5-5 4 4 3-2.500 3 3.500z" fill="#30a070"/></svg>
</div></body></html>
